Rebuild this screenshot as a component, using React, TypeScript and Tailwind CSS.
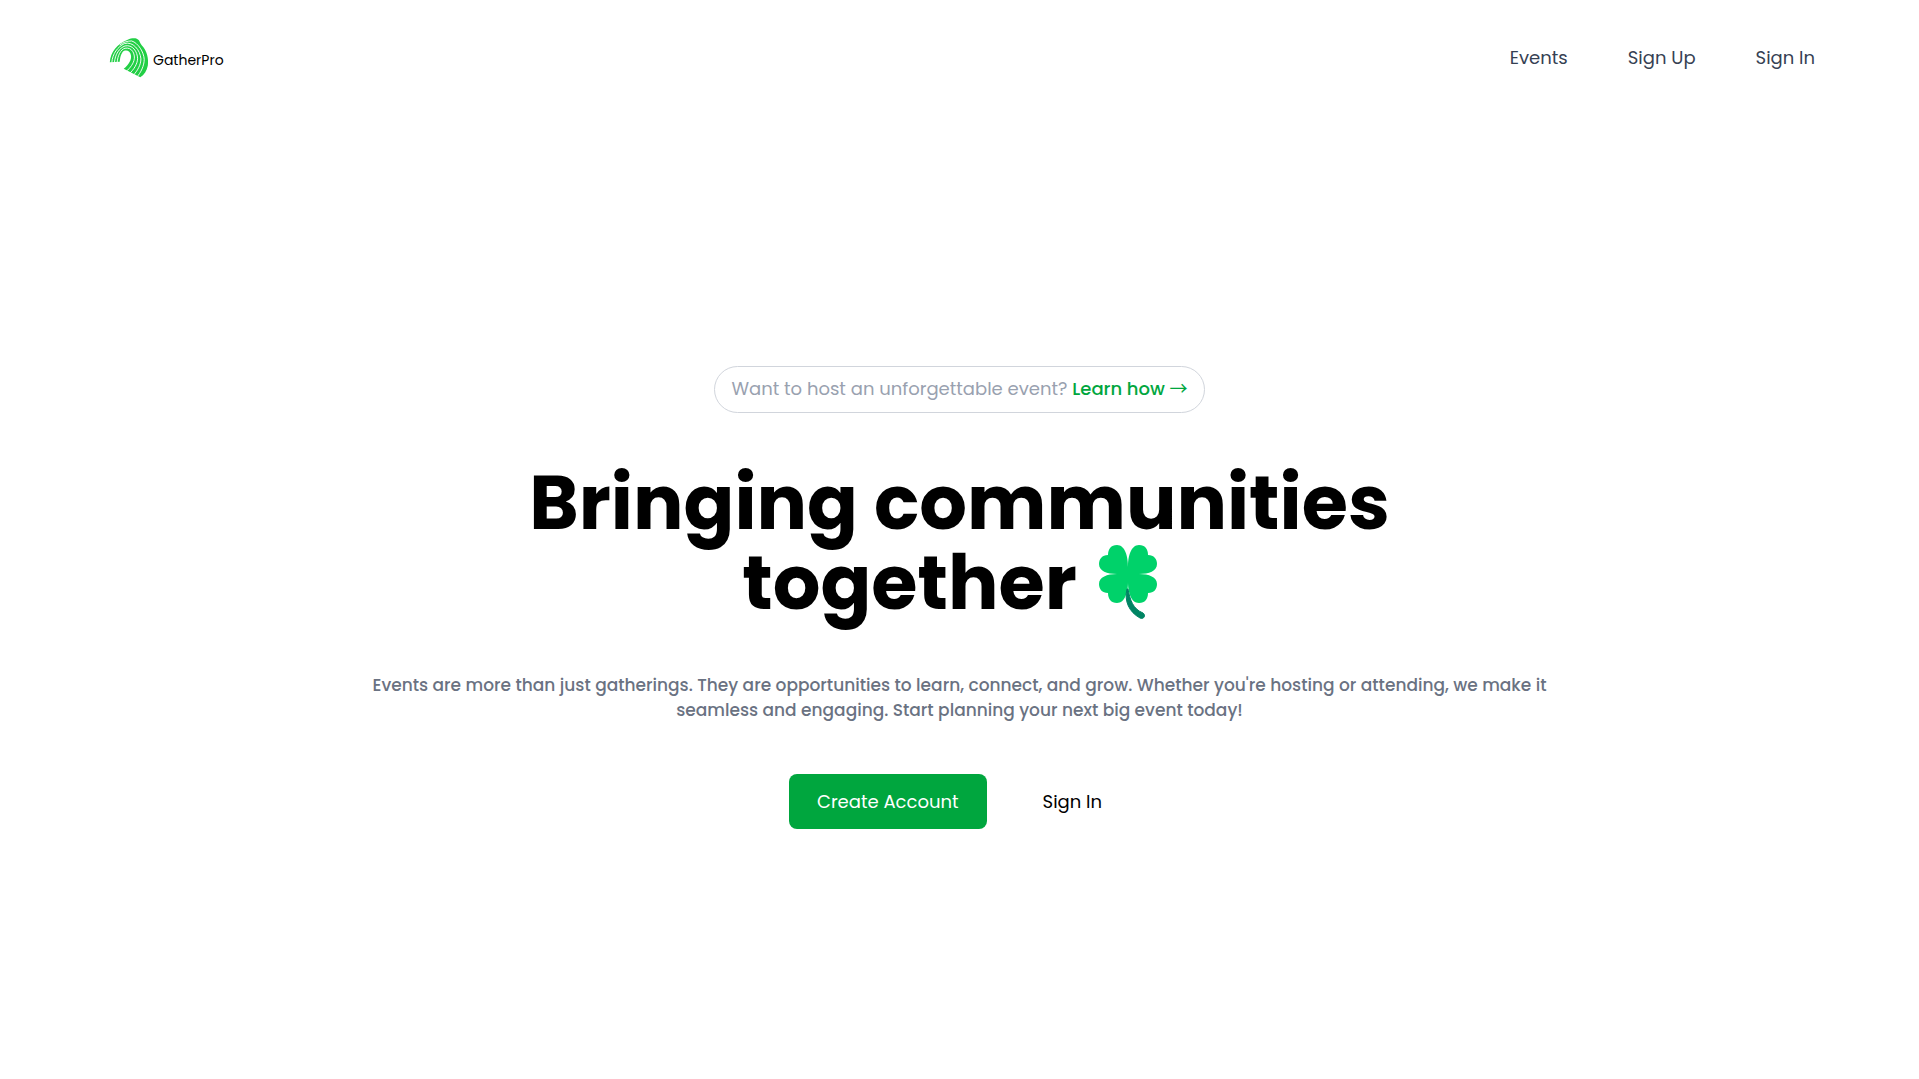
const navLinks = ["Events", "Sign Up", "Sign In"];

function LogoMark() {
  return (
    <svg viewBox="28 20 120 124" className="h-[41px] w-10" fill="none" aria-hidden="true">
      <path
        d="M30 96C32 66 52 40 84 28C98 22 112 22 118 30C122 38 124 42 127 46C142 62 148 85 145 106C142 122 134 134 122 142L72 116C88 104 96 88 94 76C92 62 82 58 72 62C64 68 61 82 60 95Z"
        fill="#22cf45"
      />
      <g stroke="#ffffff" strokeWidth="2.8">
        <path d="M52 98C54 76 62 58 76 54C98 50 106 72 104 86C102 100 92 113 79 125" />
        <path d="M44 98C46 72 58 54 76 47C98 42 114 64 114 86C113 102 103 118 89 131" />
        <path d="M36 98C38 70 54 50 74 40C100 32 122 60 124 86C124 104 114 122 100 137" />
        <path d="M60 44C72 35 84 32 96 32C116 38 133 66 134 88C134 106 124 128 111 142" />
      </g>
    </svg>
  );
}

function Clover() {
  return (
    <svg viewBox="0 0 84 80" className="inline-block h-20 w-21 align-top" role="img" aria-label="Four leaf clover">
      <g fill="#00d26a">
        <path d="M35 34V24C35 13 32 2 24 2C18 2 15 6 15 12C9 12 6 16 6 21C6 28 14 31 24 31H35Z" />
        <path d="M35 34V24C35 13 38 2 46 2C52 2 55 6 55 12C61 12 64 16 64 21C64 28 56 31 46 31H35Z" />
        <path d="M35 28V39C35 49 32 60 24 60C18 60 15 56 15 50C9 50 6 46 6 41C6 34 14 31 24 31H35Z" />
        <path d="M35 28V39C35 49 38 60 46 60C52 60 55 56 55 50C61 50 64 46 64 41C64 34 56 31 46 31H35Z" />
      </g>
      <path d="M34 46C31 58 36 69 47 75C51 77 53 72 50 70C40 66 37 57 35 46Z" fill="#008463" stroke="#008463" strokeLinejoin="round" />
    </svg>
  );
}

export default function App() {
  return (
    <div className="flex min-h-screen flex-col bg-white font-['Poppins','Inter',sans-serif] text-lg leading-[27px] text-black">
      <header className="flex items-center justify-between px-[104px] pt-[37px]">
        <a href="#" className="flex items-center gap-1 pl-[5px]">
          <LogoMark />
          <span className="pt-1 text-sm">GatherPro</span>
        </a>
        <nav className="flex gap-[60px] text-gray-700">
          {navLinks.map((label) => (
            <a key={label} href="#">
              {label}
            </a>
          ))}
        </nav>
      </header>
      <main className="flex flex-1 flex-col items-center pt-[288px] text-center">
        <p className="rounded-full border border-gray-300 px-4 pt-2 pb-[10px] leading-[27px] text-gray-400">
          Want to host an unforgettable event?{" "}
          <a href="#" className="font-medium text-green-600">
            Learn how <span className="font-['Noto_Sans_CJK_SC'] leading-none font-normal">→</span>
          </a>
        </p>
        <h1 className="mt-[50px] max-w-5xl text-[75px] leading-20 font-bold">
          Bringing communities
          <br />
          together <Clover />
        </h1>
        <p className="mt-[50px] max-w-[1200px] text-[17px] leading-[25px] font-medium text-gray-500">
          Events are more than just gatherings. They are opportunities to learn, connect, and grow. Whether you're hosting or attending, we make it seamless and engaging. Start planning your next big event today!
        </p>
        <div className="mt-[51px] flex items-center gap-7">
          <button className="rounded-lg bg-green-600 px-7 py-[14px] text-white">Create Account</button>
          <button className="px-7 py-[14px]">Sign In</button>
        </div>
      </main>
    </div>
  );
}
